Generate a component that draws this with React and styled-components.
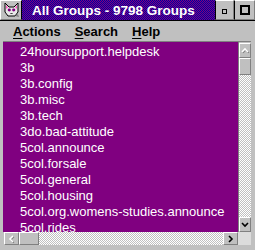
import React from 'react';
import styled, { createGlobalStyle } from 'styled-components';

const Global = createGlobalStyle`
  html, body { margin: 0; padding: 0; background: #c0c0c0; }
  body { width: 255px; height: 250px; overflow: hidden; font-family: "Liberation Sans", Arial, sans-serif; }
`;

const Window = styled.div`
  width: 255px;
  height: 250px;
  box-sizing: border-box;
  background: #c0c0c0;
  display: flex;
  flex-direction: column;
`;

const TitleBar = styled.div`
  height: 21px;
  box-sizing: border-box;
  display: flex;
  border-bottom: 1px solid #000;
`;

const bevel = `
  box-sizing: border-box;
  background: #c0c0c0;
  border-top: 1px solid #fff;
  border-left: 1px solid #fff;
  border-right: 1px solid #808080;
  border-bottom: 1px solid #808080;
`;

const SysBox = styled.div`
  ${bevel}
  width: 22px;
  display: flex;
  align-items: center;
  justify-content: center;
  border-right: 1px solid #000;
`;

const Caption = styled.div`
  flex: 1;
  display: flex;
  align-items: center;
  padding-left: 10px;
  background: repeating-conic-gradient(#800080 0% 25%, #0000a0 0% 50%) 0 0 / 2px 2px;
  color: #fff;
  font-weight: bold;
  font-size: 13.5px;
  white-space: nowrap;
  overflow: hidden;
`;

const WinButton = styled.div`
  ${bevel}
  width: ${p => p.$w}px;
  display: flex;
  align-items: center;
  justify-content: center;
  border-left: 1px solid #000;
`;

const Square = styled.div`
  width: ${p => p.$s}px;
  height: ${p => p.$s}px;
  box-sizing: border-box;
  border: ${p => (p.$s > 6 ? 2 : 1)}px solid #000;
  margin-top: ${p => p.$mt || 0}px;
`;

const MenuBar = styled.div`
  height: 20px;
  display: flex;
  align-items: center;
  padding-left: 6px;
  font-size: 13px;
  font-weight: bold;
  color: #000;
`;

const MenuItem = styled.span`
  padding: 0 7px;
  & u { text-decoration: underline; text-underline-offset: 2px; }
`;

const Body = styled.div`
  flex: 1;
  margin: 0 4px 5px 3px;
  display: grid;
  grid-template-columns: 1fr 13px;
  grid-template-rows: 1fr 13px;
  border-top: 1px solid #808080;
  min-height: 0;
`;

const List = styled.div`
  background: #800080;
  color: #fff;
  font-size: 13px;
  padding: 2px 0 0 17px;
  overflow: hidden;
  white-space: nowrap;
  min-height: 0;
`;

const Row = styled.div`
  height: 16px;
  line-height: 16px;
`;

const VScroll = styled.div`
  display: flex;
  flex-direction: column;
  border-left: 1px solid #808080;
  padding-top: 1px;
  min-height: 0;
`;

const HScroll = styled.div`
  display: flex;
  flex-direction: row;
  padding-left: 1px;
`;

const Track = styled.div`
  flex: 1;
  background: repeating-conic-gradient(#c0c0c0 0% 25%, #ffffff 0% 50%) 0 0 / 2px 2px;
`;

const ArrowBtn = styled.div`
  ${bevel}
  ${p => (p.$vertical ? 'height: 15px;' : 'width: 15px;')}
  flex: none;
  display: flex;
  align-items: center;
  justify-content: center;
`;

const Thumb = styled.div`
  ${bevel}
  flex: none;
  ${p => (p.$vertical ? 'height: 17px;' : 'width: 20px;')}
`;

const Corner = styled.div`
  background: #dcdcdc;
`;

const Chevron = ({ dir, disabled }) => {
  const pts = {
    up: '2,6 5,3 8,6',
    down: '2,3 5,6 8,3',
    left: '6,2 3,5 6,8',
    right: '3,2 6,5 3,8',
  }[dir];
  return (
    <svg width="10" height="10" viewBox="0 0 10 10">
      {disabled && (
        <polyline points={pts} fill="none" stroke="#808080" strokeWidth="1.6" transform="translate(0.8,0.8)" />
      )}
      <polyline points={pts} fill="none" stroke={disabled ? '#fff' : '#000'} strokeWidth="1.6" />
    </svg>
  );
};

const AppIcon = () => (
  <svg width="17" height="16" viewBox="0 0 17 16">
    <path d="M2 1 L6 5 L11 5 L15 1 L15 10 L12 14 L5 14 L2 10 Z" fill="#e8e8e8" stroke="#000" strokeWidth="1" />
    <path d="M3 3 L5 5.5 L3 7 Z" fill="#ff60c0" />
    <path d="M14 3 L12 5.5 L14 7 Z" fill="#ff60c0" />
    <ellipse cx="6.3" cy="8" rx="1.6" ry="1.4" fill="#800080" />
    <ellipse cx="10.7" cy="8" rx="1.6" ry="1.4" fill="#800080" />
    <path d="M7.5 11 L8.5 12 L9.5 11" fill="none" stroke="#000" strokeWidth="0.9" />
    <path d="M12 14 L15 12 L16 15 Z" fill="#808080" />
  </svg>
);

const groups = [
  '24hoursupport.helpdesk',
  '3b',
  '3b.config',
  '3b.misc',
  '3b.tech',
  '3do.bad-attitude',
  '5col.announce',
  '5col.forsale',
  '5col.general',
  '5col.housing',
  '5col.org.womens-studies.announce',
  '5col.rides',
];

export default function App() {
  return (
    <>
      <Global />
      <Window>
        <TitleBar>
          <SysBox><AppIcon /></SysBox>
          <Caption>All Groups - 9798 Groups</Caption>
          <WinButton $w={19}><Square $s={5} $mt={3} /></WinButton>
          <WinButton $w={21}><Square $s={10} /></WinButton>
        </TitleBar>
        <MenuBar>
          <MenuItem><u>A</u>ctions</MenuItem>
          <MenuItem><u>S</u>earch</MenuItem>
          <MenuItem><u>H</u>elp</MenuItem>
        </MenuBar>
        <Body>
          <List>
            {groups.map(g => <Row key={g}>{g}</Row>)}
          </List>
          <VScroll>
            <ArrowBtn $vertical><Chevron dir="up" disabled /></ArrowBtn>
            <Thumb $vertical />
            <Track />
            <ArrowBtn $vertical><Chevron dir="down" /></ArrowBtn>
          </VScroll>
          <HScroll>
            <ArrowBtn><Chevron dir="left" disabled /></ArrowBtn>
            <Thumb />
            <Track />
            <ArrowBtn><Chevron dir="right" /></ArrowBtn>
          </HScroll>
          <Corner />
        </Body>
      </Window>
    </>
  );
}
